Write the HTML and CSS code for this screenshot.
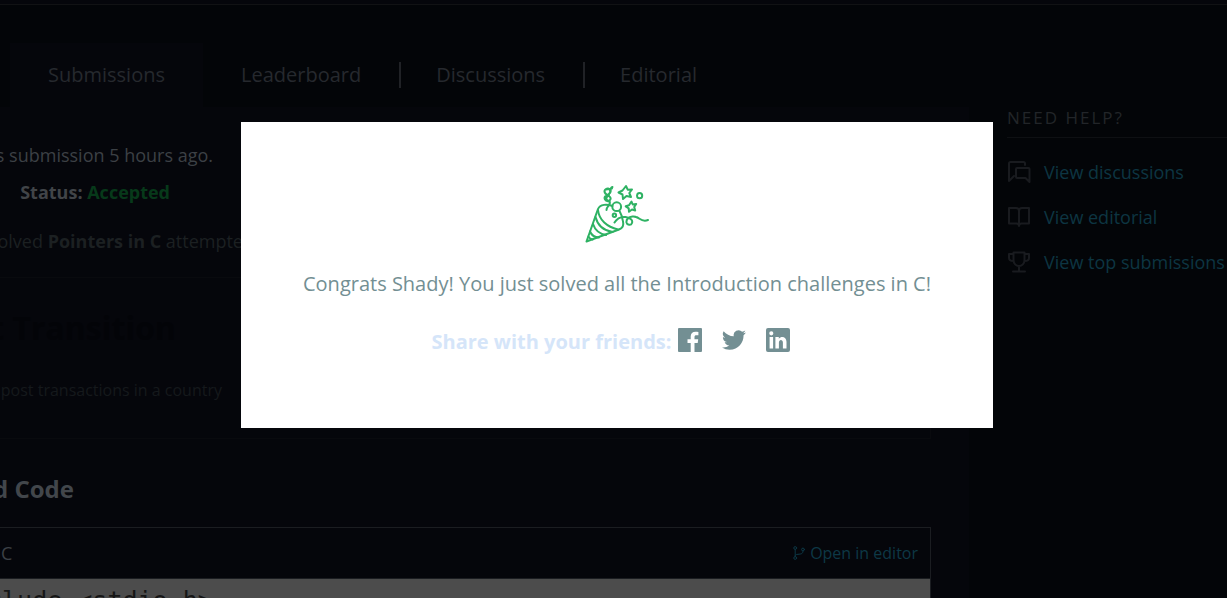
FILE: index.html
```html
<!DOCTYPE html>
<html lang="en">
<head>
<meta charset="utf-8">
<title>Submissions</title>
<link rel="stylesheet" href="styles.css">
</head>
<body>
<div class="page">
  <div class="topbar"></div>
  <nav class="tabs">
    <a class="tab tab-active" href="#">Submissions</a>
    <a class="tab" href="#">Leaderboard</a>
    <a class="tab tab-divided" href="#">Discussions</a>
    <a class="tab tab-divided" href="#">Editorial</a>
  </nav>
  <div class="columns">
    <main class="content">
      <p class="row made"><span>is submission 5 hours ago.</span></p>
      <p class="row status"><strong>Status: <span class="accepted">Accepted</span></strong></p>
      <p class="row solved"><span>solved <strong>Pointers in C</strong> attempted</span></p>
      <section class="card">
        <h2 class="row card-title">t Transition</h2>
        <p class="row card-text">post transactions in a country</p>
      </section>
      <h3 class="row code-title">d Code</h3>
      <section class="code">
        <header class="code-head">
          <span class="lang">C</span>
          <a class="open" href="#">
            <svg class="branch" viewBox="0 0 12 14"><circle cx="2.2" cy="2" r="1.4"/><circle cx="2.2" cy="12" r="1.4"/><circle cx="10" cy="3.5" r="1.4"/><path d="M2.2 3.500v7M10 5c0 3-2 3-5 3.300S2.200 9.500 2.200 10.500"/></svg>
            Open in editor
          </a>
        </header>
        <pre class="row code-body">clude &lt;stdio.h&gt;</pre>
      </section>
    </main>
    <aside class="help">
      <h4 class="help-title">NEED HELP?</h4>
      <a class="help-link" href="#">
        <svg class="help-icon" viewBox="0 0 24 24"><path d="M2 21V3.500Q2 2 3.500 2h13Q18 2 18 3.500V5M2 21l5-5M10 8h11.500q1 0 1 1v13l-4-4H10q-1 0-1-1V9q0-1 1-1z"/></svg>
        View discussions
      </a>
      <a class="help-link" href="#">
        <svg class="help-icon" viewBox="0 0 24 24"><path d="M12 6c0-2-1-3-3-3H2v15.500h7.500c1.500 0 2.500.5 2.500 2.500V6c0-2 1-3 3-3h7v15.500h-7.500c-1.500 0-2.500.5-2.500 2.500"/></svg>
        View editorial
      </a>
      <a class="help-link" href="#">
        <svg class="help-icon" viewBox="0 0 24 24"><path d="M6.500 2.500h11V10c0 3.500-2.500 6-5.500 6s-5.500-2.500-5.500-6zM6.500 4H2v4c0 2 1.500 3 4.500 3M17.500 4H22v4c0 2-1.500 3-4.500 3M12 16v5.500M6 21.500h12"/></svg>
        View top submissions
      </a>
    </aside>
  </div>
</div>
<div class="overlay">
  <div class="modal" role="dialog" aria-label="Congratulations">
    <svg class="party" viewBox="0 0 64 60">
      <path d="M27.500 22C22 20 15 20 13 25L1.500 57.500 34 45.500c4-1.500 5-4 4-8-.5-4-1.500-7-3.500-10.500"/>
      <path d="M13 26c1 10 9 17 20 19.500M10.500 33c2 8 8 13.500 17 15M8 40c2 6 7 10 13 11M5 47.500c1.500 3.500 4.500 6 9 6M3.500 52.500q1 2.500 4 3"/>
      <path d="M21.500 26c0-4 5-5 3-9M24 17c-4 1-6-4-3-5s6 2 4 4-5-1-3-3M24 11c-4 0-6-4-3-6s6 2 3 5M21 5.500l6-1M25 9c2-2-1-5 2.500-6"/>
      <circle cx="31.700" cy="22.700" r="4.400"/><circle cx="29.400" cy="31.200" r="1.700"/><circle cx="54.600" cy="11.700" r="2.600"/>
      <path d="M41 2l1.700 3.700 4.300-.2-2.700 3.500 1.700 4-4.500-1-3.500 3-.5-4.500-4-2 4-2z"/>
      <path d="M46.500 17.500l1.200 3 3.500-.5-2 3 1 3.500-3.200-1-3 2.300-.3-3.500-3-2 3.300-1z"/>
      <path d="M29.500 38.500c3-5 7-6 11-5.500 5 1 7.500 3 6.500 6s-5 2-5.500-.5c-.5-3 2-5.500 6-6 7-1 8 7 15.500 3.500"/>
    </svg>
    <p class="congrats">Congrats Shady! You just solved all the Introduction challenges in C!</p>
    <div class="share">
      <strong class="share-label">Share with your friends:</strong>
      <a class="social" href="#" aria-label="Facebook"><svg viewBox="0 0 24 24"><path fill-rule="evenodd" d="M1 0h22q1 0 1 1v22q0 1-1 1h-6.500v-9h3.200l.5-3.700h-3.700V9c0-1.200.5-1.800 1.900-1.800h2V4c-5-1-7.700.5-7.700 4.500v2.800H9.500V15h3.200v9H1q-1 0-1-1V1q0-1 1-1z"/></svg></a>
      <a class="social" href="#" aria-label="Twitter"><svg viewBox="0 0 24 24"><path d="M23.950 4.570a10 10 0 0 1-2.820.77 4.960 4.960 0 0 0 2.160-2.720c-.95.550-2 .95-3.130 1.180a4.920 4.920 0 0 0-8.380 4.480C7.690 8.090 4.070 6.130 1.640 3.160a4.920 4.920 0 0 0 1.520 6.570 4.900 4.900 0 0 1-2.230-.61v.06a4.920 4.920 0 0 0 3.950 4.830 5 5 0 0 1-2.210.09 4.940 4.940 0 0 0 4.600 3.420A9.870 9.870 0 0 1 0 19.540a14 14 0 0 0 7.550 2.210c9.050 0 14-7.500 14-13.980l-.02-.64a10 10 0 0 0 2.420-2.560z"/></svg></a>
      <a class="social" href="#" aria-label="LinkedIn"><svg viewBox="0 0 24 24"><path fill-rule="evenodd" d="M2 0h20q2 0 2 2v20q0 2-2 2H2q-2 0-2-2V2q0-2 2-2zM3.600 9v11.500h3.500V9zM5.300 3.300a2 2 0 1 0 .02 4.100 2 2 0 1 0-.02-4.100zM9.400 9v11.500h3.500v-6c0-3.500 4-3.500 4 0v6h3.600v-6.800c0-5.500-5.500-6-7.700-3V9z"/></svg></a>
    </div>
  </div>
</div>
</body>
</html>
```
FILE: styles.css
```css
* { box-sizing: border-box; }
body {
  margin: 0;
  background: #030508;
  font-family: "Open Sans", sans-serif;
  font-size: 18px;
  line-height: 24px;
  color: #3c4045;
}
a { color: inherit; text-decoration: none; }
p, h2, h3, h4, pre { margin: 0; }
svg { display: block; fill: none; stroke: currentColor; stroke-width: 2; stroke-linecap: round; stroke-linejoin: round; }
.page { height: 100vh; overflow: hidden; display: flex; flex-direction: column; }
.topbar { flex: none; height: 5px; background: #05060b; border-bottom: 1px solid #111214; }
.tabs { flex: none; display: flex; padding: 38px 0 0 10px; font-size: 20px; color: #26292e; }
.tab { display: flex; align-items: center; height: 64px; padding: 0 38px; }
.tab-active { background: #05060b; }
.tab-divided::before { content: ""; width: 2px; height: 26px; margin-right: 35px; background: #202226; }
.tab-divided { padding-left: 0; }
.columns { flex: 1; display: flex; gap: 38px; }
.content { flex: 1; background: #05060b; padding: 36px 38px 0 0; min-width: 0; }
.row { display: flex; justify-content: flex-end; white-space: nowrap; }
.made { width: 213px; }
.status { width: 170px; margin-top: 13px; color: #414448; }
.accepted { color: #07391a; }
.solved { width: 254px; margin-top: 25px; color: #1c2022; }
.card { margin-top: 24px; padding: 34px 0 36px; border: 1px solid #090a0e; border-left: 0; }
.card-title { width: 176px; font-size: 32px; line-height: 32px; color: #030408; }
.card-text { width: 222px; margin-top: 34px; font-size: 16px; color: #15191c; }
.code-title { width: 74px; margin-top: 34px; font-size: 24px; line-height: 32px; color: #42464b; }
.code { margin-top: 22px; border: 1px solid #1b1d21; border-left: 0; }
.code-head { display: flex; justify-content: space-between; align-items: center; height: 51px; padding: 0 12px 0 1px; border-bottom: 1px solid #1b1d21; }
.open { display: flex; align-items: center; gap: 5px; font-size: 16px; color: #0d3846; }
.branch { width: 12px; height: 14px; stroke-width: 1; }
.code-body { width: 100%; height: 80px; padding-top: 8px; justify-content: flex-start; background: #4c4c4c; color: #161616; font: 25px/28px "DejaVu Sans Mono", monospace; text-indent: -13px; }
.help { width: 220px; padding-top: 1px; }
.help-title { height: 30px; border-bottom: 1px solid #0e1013; font-weight: 400; font-size: 17px; line-height: 20px; letter-spacing: 2px; color: #222529; margin-bottom: 11px; }
.help-link { display: flex; align-items: center; gap: 13px; height: 45px; white-space: nowrap; color: #0d3542; }
.help-icon { flex: none; width: 24px; height: 24px; color: #191b1f; }
.overlay { position: fixed; inset: 0; display: flex; justify-content: center; align-items: flex-start; padding: 122px 0 0 7px; }
.modal { width: 752px; padding: 62px 32px 70px; display: flex; flex-direction: column; align-items: center; background: #fff; }
.party { width: 64px; height: 60px; color: #2eb263; }
.congrats { margin-top: 24px; font-size: 20px; line-height: 32px; color: #738f93; }
.share { display: flex; align-items: flex-start; gap: 20px; margin-top: 24px; margin-right: 12px; font-size: 20px; line-height: 32px; color: #738f93; }
.share-label { padding-top: 2px; margin-right: -13px; color: #d5e5f9; }
.social { padding-top: 4px; }
.social svg { width: 24px; height: 24px; fill: currentColor; stroke: none; }
```
